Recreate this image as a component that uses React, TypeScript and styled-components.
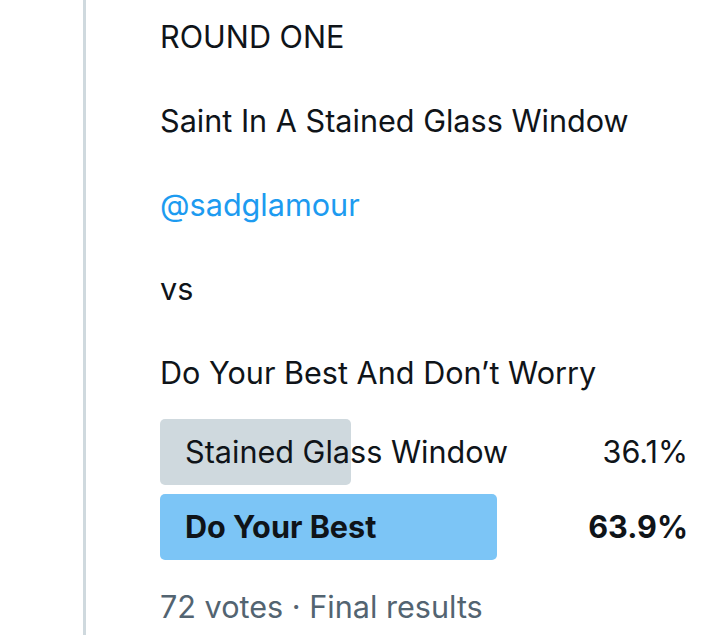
import * as React from "react";
import styled, { createGlobalStyle } from "styled-components";

const GlobalStyle = createGlobalStyle`
  html, body {
    margin: 0;
    padding: 0;
    background: #ffffff;
  }
  body {
    font-family: Inter, Roboto, "Liberation Sans", sans-serif;
    color: #0f1419;
  }
`;

type Option = {
  label: string;
  percent: number;
  winner?: boolean;
};

const options: Option[] = [
  { label: "Stained Glass Window", percent: 36.1 },
  { label: "Do Your Best", percent: 63.9, winner: true },
];

const App = () => {
  return (
    <>
      <GlobalStyle />
      <Page>
        <Rail />
        <Content>
          <Paragraph>ROUND ONE</Paragraph>
          <Paragraph>Saint In A Stained Glass Window</Paragraph>
          <Paragraph>
            <Mention>@sadglamour</Mention>
          </Paragraph>
          <Paragraph>vs</Paragraph>
          <LastLine>Do Your Best And Don’t Worry</LastLine>

          <Poll>
            {options.map((option) => (
              <OptionRow key={option.label} $winner={option.winner}>
                <Bar
                  $winner={option.winner}
                  style={{ width: `${option.percent}%` }}
                />
                <OptionLabel>{option.label}</OptionLabel>
                <Percent>{option.percent.toFixed(1)}%</Percent>
              </OptionRow>
            ))}
          </Poll>

          <Footer>72 votes · Final results</Footer>
        </Content>
      </Page>
    </>
  );
};

const Page = styled.div`
  display: flex;
  min-height: 635px;
  padding-left: 83px;
  box-sizing: border-box;
`;

const Rail = styled.div`
  width: 3px;
  flex-shrink: 0;
  background: #cfd9de;
`;

const Content = styled.div`
  flex: 1;
  padding: 16px 32px 0 74px;
  font-size: 30.6px;
  line-height: 42px;
`;

const Paragraph = styled.div`
  margin-bottom: 42px;
`;

const LastLine = styled.div``;

const Mention = styled.span`
  color: #1d9bf0;
`;

const Poll = styled.div`
  display: flex;
  flex-direction: column;
  gap: 9px;
  margin-top: 25px;
`;

const OptionRow = styled.div<{ $winner?: boolean }>`
  position: relative;
  display: flex;
  align-items: center;
  justify-content: space-between;
  height: 66px;
  padding-left: 25px;
  font-weight: ${(p) => (p.$winner ? 700 : 400)};
`;

const Bar = styled.div<{ $winner?: boolean }>`
  position: absolute;
  top: 0;
  bottom: 0;
  left: 0;
  border-radius: 5px;
  background: ${(p) => (p.$winner ? "rgba(29, 155, 240, 0.58)" : "#cfd9de")};
`;

const OptionLabel = styled.span`
  position: relative;
`;

const Percent = styled.span`
  position: relative;
`;

const Footer = styled.div`
  margin-top: 26px;
  color: #536471;
`;

export default App;
